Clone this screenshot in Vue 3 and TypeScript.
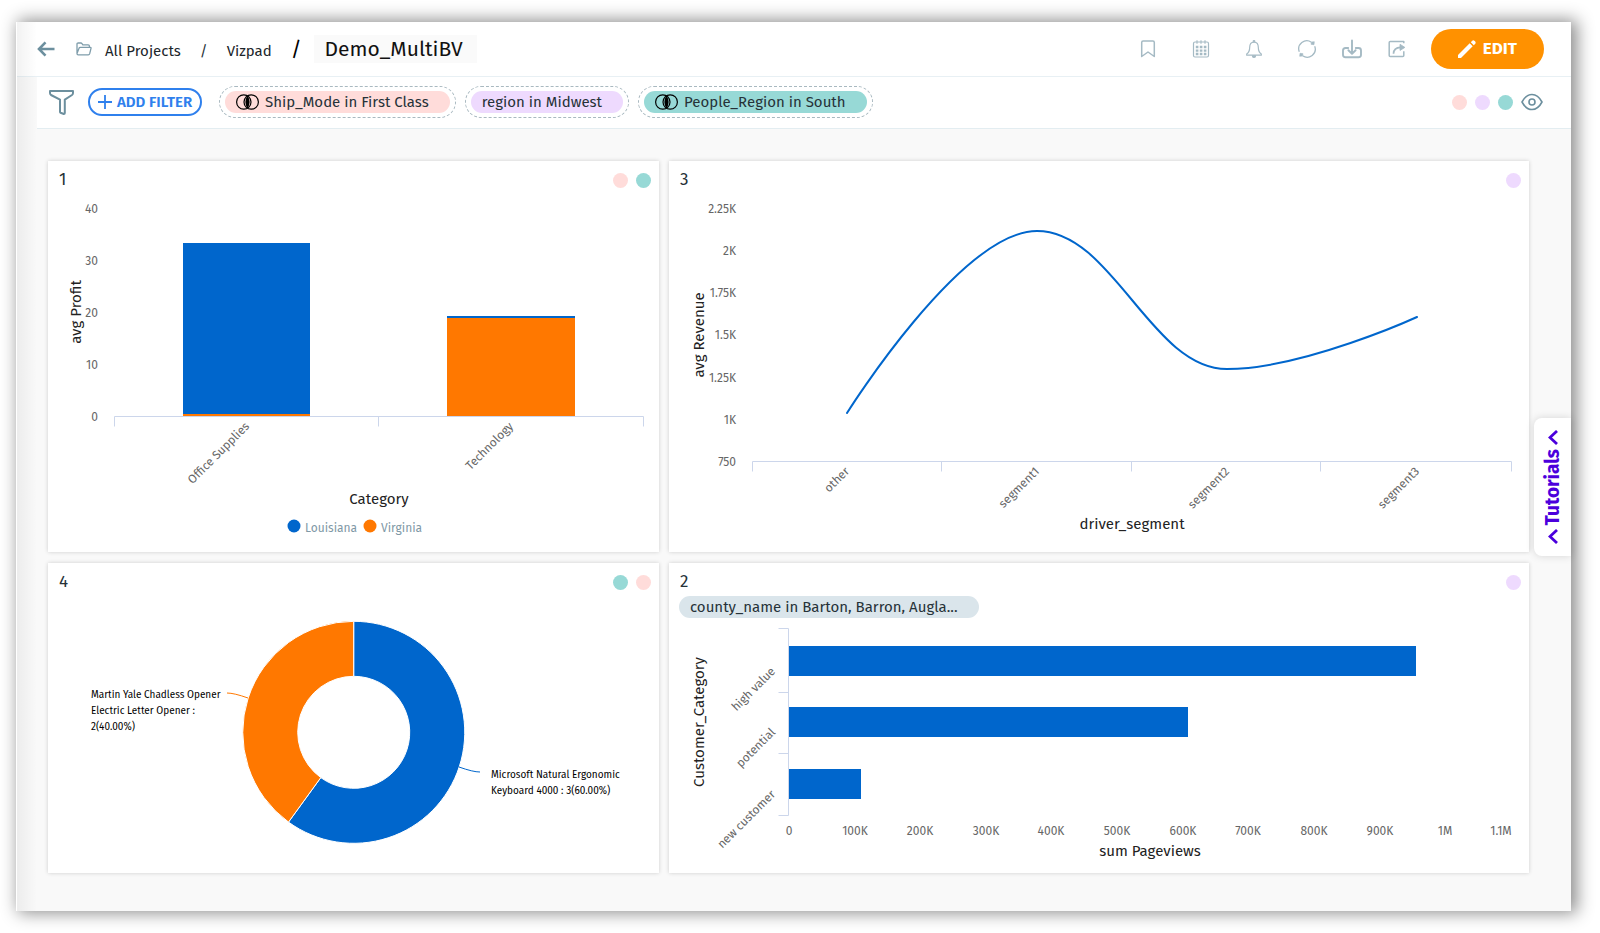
<script setup lang="ts">
type Tone = 'rose' | 'lilac' | 'teal'

interface Filter {
  label: string
  tone: Tone
  blended: boolean
}

interface Tick {
  label: string
  at: number
}

const filters: Filter[] = [
  { label: 'Ship_Mode in First Class', tone: 'rose', blended: true },
  { label: 'region in Midwest', tone: 'lilac', blended: false },
  { label: 'People_Region in South', tone: 'teal', blended: true },
]

const legendTones: Tone[] = ['rose', 'lilac', 'teal']

const profitTicks: Tick[] = [
  { label: '40', at: 18 },
  { label: '30', at: 70 },
  { label: '20', at: 122 },
  { label: '10', at: 174 },
  { label: '0', at: 226 },
]

const revenueTicks: Tick[] = [
  { label: '2.25K', at: 18 },
  { label: '2K', at: 60 },
  { label: '1.75K', at: 102 },
  { label: '1.5K', at: 144 },
  { label: '1.25K', at: 187 },
  { label: '1K', at: 229 },
  { label: '750', at: 271 },
]

const segments: Tick[] = [
  { label: 'other', at: 178 },
  { label: 'segment1', at: 368 },
  { label: 'segment2', at: 558 },
  { label: 'segment3', at: 748 },
]

const categories = [
  { label: 'high value', y: 28, width: 627 },
  { label: 'potential', y: 89, width: 399 },
  { label: 'new customer', y: 151, width: 72 },
]

const pageviewTicks: Tick[] = [
  { label: '0', at: 120 },
  { label: '100K', at: 186 },
  { label: '200K', at: 251 },
  { label: '300K', at: 317 },
  { label: '400K', at: 382 },
  { label: '500K', at: 448 },
  { label: '600K', at: 514 },
  { label: '700K', at: 579 },
  { label: '800K', at: 645 },
  { label: '900K', at: 711 },
  { label: '1M', at: 776 },
  { label: '1.1M', at: 832 },
]
</script>

<template>
  <div class="page">
    <div class="window">
      <header class="topbar">
        <nav class="crumbs" aria-label="Breadcrumb">
          <button class="icon-btn back" type="button" aria-label="Back">
            <svg width="18" height="16" viewBox="0 0 18 16" fill="none" stroke="currentColor" stroke-width="2.6">
              <path d="M17.5 8H2.5M8.5 1.4 2 8l6.500 6.600" />
            </svg>
          </button>
          <svg class="folder" width="16" height="14" viewBox="0 0 16 14" fill="none" stroke="currentColor" stroke-width="1.300" stroke-linejoin="round" aria-hidden="true">
            <path d="M1 11.500V2.200Q1 1 2.200 1h2.600q.8 0 1.200.7l.8 1.100h5.400q1.200 0 1.200 1.200v1.400M1 11.500 3 6.300q.3-.9 1.300-.9h10q1 0 .7 1l-1.300 5.300q-.3 1.100-1.400 1.100H2.200Q1 12.800 1 11.500Z" />
          </svg>
          <div class="trail">
            <a href="#projects">All Projects</a>
            <span>/</span>
            <a href="#vizpad">Vizpad</a>
            <span class="slash">/</span>
            <h1>Demo_MultiBV</h1>
          </div>
        </nav>

        <div class="tools">
          <button class="icon-btn" type="button" aria-label="Bookmark">
            <svg width="20" height="20" viewBox="0 0 20 20" fill="none" stroke="currentColor" stroke-width="1.500" stroke-linejoin="round">
              <path d="M3.700 17.500V3.400q0-1.400 1.400-1.400h9.800q1.400 0 1.400 1.400v14.100L10 13Z" />
            </svg>
          </button>
          <button class="icon-btn" type="button" aria-label="Schedule">
            <svg width="20" height="20" viewBox="0 0 20 20" fill="none" stroke="currentColor">
              <rect x="2.500" y="3" width="15" height="15" rx="1.500" stroke-width="1.200" />
              <path d="M6 1.200v3.600M10 1.200v3.600M14 1.200v3.600" stroke-width="1.100" />
              <path d="M4.800 8h10.600M4.800 11.600h10.600M4.800 15h10.600" stroke-width="2.400" stroke-dasharray="2.600 1.400" />
            </svg>
          </button>
          <button class="icon-btn" type="button" aria-label="Alerts">
            <svg width="20" height="20" viewBox="0 0 20 20" fill="none" stroke="currentColor" stroke-width="1.200" stroke-linejoin="round">
              <path d="M10 3q4.300.3 4.300 5.200 0 4.800 3 6.800v1.200H2.700V15q3-2 3-6.800Q5.700 3.300 10 3Z" />
              <circle cx="10" cy="2.300" r=".8" />
              <path d="M8.400 16.800q0 1.700 1.600 1.700t1.600-1.700Z" fill="currentColor" />
            </svg>
          </button>
          <button class="icon-btn" type="button" aria-label="Refresh">
            <svg width="20" height="20" viewBox="0 0 20 20" fill="none" stroke="currentColor" stroke-width="1.300">
              <path d="M2.300 12.800A8.100 8.100 0 0 1 14.400 3.200M17.700 7.200A8.100 8.100 0 0 1 5.600 16.800" />
              <path d="m14 5.300.6-2.300 2.700-.3-.3 3ZM6 14.700l-.6 2.300-2.700.3.3-3Z" fill="currentColor" stroke-width=".6" />
            </svg>
          </button>
          <button class="icon-btn near" type="button" aria-label="Download">
            <svg width="20" height="20" viewBox="0 0 20 20" fill="none" stroke="currentColor" stroke-width="1.900" stroke-linecap="round" stroke-linejoin="round">
              <path d="M6.200 9H3.500Q1 9 1 11.500v4.200q0 2.500 2.500 2.500h13q2.500 0 2.500-2.500v-4.200Q19 9 16.500 9h-2.700M10 1.500v13M6.400 11.200 10 14.700l3.600-3.500" />
            </svg>
          </button>
          <button class="icon-btn near" type="button" aria-label="Share">
            <svg width="20" height="20" viewBox="0 0 20 20" fill="none" stroke="currentColor" stroke-width="1.500" stroke-linejoin="round">
              <path d="M16.800 4.300V2.500H3.200q-1 0-1 1v13q0 1 1 1h12.600q1 0 1-1v-4.200" />
              <path d="M6.500 14.800q.2-6.200 7-6.400" stroke-width="1.700" />
              <path d="M13 5.300 17.900 8.400 13 11.400Z" fill="currentColor" stroke-width=".8" />
            </svg>
          </button>
          <button class="edit" type="button">
            <svg width="18" height="18" viewBox="0 0 18 18" fill="currentColor" aria-hidden="true">
              <path d="M0 18v-3L11.700 3.300l3 3L3 18ZM12.800 2.200l1.200-1.200q1.200-1.200 2.400-.2l.8.800q1 1.200-.2 2.400l-1.200 1.200Z" />
            </svg>
            EDIT
          </button>
        </div>
      </header>

      <section class="filterbar" aria-label="Filters">
        <svg class="funnel" width="25" height="25" viewBox="0 0 25 25" fill="none" stroke="currentColor" stroke-width="2" stroke-linejoin="round" aria-hidden="true">
          <path d="M1 1h23v2q0 1.300-1 2l-7.200 4.600V23q0 1-1 1l-3.200-1.200q-.6-.3-.6-1V9.600L2 5Q1 4.300 1 3Z" />
        </svg>
        <button class="add" type="button">
          <svg width="14" height="14" viewBox="0 0 14 14" stroke="currentColor" stroke-width="1.800" aria-hidden="true">
            <path d="M7 0v14M0 7h14" />
          </svg>
          ADD FILTER
        </button>
        <ul class="pills">
          <li v-for="f in filters" :key="f.label" class="pill">
            <button type="button" class="pill-body" :class="f.tone">
              <svg v-if="f.blended" width="23" height="16" viewBox="0 0 23 16" fill="none" stroke="#000" stroke-width="1.200" aria-hidden="true">
                <circle cx="7.800" cy="8" r="7.200" />
                <circle cx="15.200" cy="8" r="7.200" />
                <path d="M11.500 3.200q2.600 4.800 0 9.600-2.600-4.800 0-9.600Z" fill="#000" stroke-width="1.600" />
              </svg>
              {{ f.label }}
            </button>
          </li>
        </ul>
        <div class="legend">
          <span v-for="t in legendTones" :key="t" class="dot" :class="t"></span>
          <button class="icon-btn eye" type="button" aria-label="Show filters">
            <svg width="22" height="18" viewBox="0 0 22 18" fill="none" stroke="currentColor" stroke-width="1.600">
              <path d="M1 9q4-7.500 10-7.500T21 9q-4 7.500-10 7.500T1 9Z" stroke-linejoin="round" />
              <circle cx="11" cy="9" r="3" />
            </svg>
          </button>
        </div>
      </section>

      <main class="board">
        <article class="card">
          <header class="card-head">
            <h2>1</h2>
            <span class="dots"><span class="dot rose"></span><span class="dot teal"></span></span>
          </header>
          <div class="plot">
            <svg viewBox="0 0 611 361" role="img" aria-label="Average profit by category">
              <g class="tick end">
                <text v-for="t in profitTicks" :key="t.label" x="50" :y="t.at + 4">{{ t.label }}</text>
              </g>
              <text class="title" transform="translate(33 121) rotate(-90)">avg Profit</text>
              <path class="axis" d="M66.500 235.500v-10h529v10M330.500 225.500v10" />
              <rect class="blue" x="135" y="52" width="127" height="171" />
              <rect class="orange" x="135" y="223" width="127" height="2" />
              <rect class="blue" x="399" y="125" width="128" height="2" />
              <rect class="orange" x="399" y="127" width="128" height="98" />
              <g class="tick end">
                <text transform="translate(202 236) rotate(-45)">Office Supplies</text>
                <text transform="translate(466 236) rotate(-45)">Technology</text>
              </g>
              <text class="title" x="331" y="313">Category</text>
              <circle class="blue" cx="246" cy="335" r="6.500" />
              <circle class="orange" cx="322" cy="335" r="6.500" />
              <g class="tick series">
                <text x="257" y="341">Louisiana</text>
                <text x="333" y="341">Virginia</text>
              </g>
            </svg>
          </div>
        </article>

        <article class="card">
          <header class="card-head">
            <h2>3</h2>
            <span class="dots"><span class="dot lilac"></span></span>
          </header>
          <div class="plot">
            <svg viewBox="0 0 860 361" role="img" aria-label="Average revenue by driver segment">
              <g class="tick end">
                <text v-for="t in revenueTicks" :key="t.label" x="67" :y="t.at + 4">{{ t.label }}</text>
              </g>
              <text class="title" transform="translate(35 144) rotate(-90)">avg Revenue</text>
              <path class="axis" d="M83.500 280.500v-10h759v10M272.500 270.500v10M462.500 270.500v10M651.500 270.500v10" />
              <path class="line" d="M178 222C178 222 292 40 368 40S482 178 558 178 748 126 748 126" />
              <g class="tick end">
                <text v-for="s in segments" :key="s.label" :transform="`translate(${s.at + 3} 281) rotate(-45)`">{{ s.label }}</text>
              </g>
              <text class="title" x="463" y="338">driver_segment</text>
            </svg>
          </div>
        </article>

        <article class="card">
          <header class="card-head">
            <h2>4</h2>
            <span class="dots"><span class="dot teal"></span><span class="dot rose"></span></span>
          </header>
          <div class="plot">
            <svg viewBox="0 0 611 280" role="img" aria-label="Product share">
              <g stroke="#fff">
                <path class="blue" d="M305.700 28.300A111 111 0 1 1 240.500 229.100L272.800 184.600A56 56 0 1 0 305.700 83.300Z" />
                <path class="orange" d="M240.500 229.100A111 111 0 0 1 305.700 28.300V83.300A56 56 0 0 0 272.800 184.600Z" />
              </g>
              <path class="lead warm" d="M179 100q7 0 21 5" />
              <path class="lead" d="M411 174q14 5 21 5" />
              <g class="slice">
                <text x="43" y="105">Martin Yale Chadless Opener</text>
                <text x="43" y="121">Electric Letter Opener :</text>
                <text x="43" y="137">2(40.00%)</text>
                <text x="443" y="185">Microsoft Natural Ergonomic</text>
                <text x="443" y="201">Keyboard 4000 : 3(60.00%)</text>
              </g>
            </svg>
          </div>
        </article>

        <article class="card">
          <header class="card-head">
            <h2>2</h2>
            <span class="dots"><span class="dot lilac"></span></span>
          </header>
          <div class="local-filter">county_name in Barton, Barron, Augla...</div>
          <div class="plot">
            <svg viewBox="0 0 860 255" role="img" aria-label="Pageviews by customer category">
              <text class="title" transform="translate(35 104) rotate(-90)">Customer_Category</text>
              <path class="axis" d="M109.500 10.500h10v187h-10M109.500 74.500h10M109.500 135.500h10" />
              <g v-for="c in categories" :key="c.label">
                <rect class="blue" x="120" :y="c.y" :width="c.width" height="30" />
                <text class="tick end" :transform="`translate(107 ${c.y + 26}) rotate(-45)`">{{ c.label }}</text>
              </g>
              <g class="tick mid">
                <text v-for="t in pageviewTicks" :key="t.label" :x="t.at" y="217">{{ t.label }}</text>
              </g>
              <text class="title" x="481" y="238">sum Pageviews</text>
            </svg>
          </div>
        </article>
      </main>

      <button class="tutorials" type="button">
        <svg width="10" height="15" viewBox="0 0 10 15" fill="none" stroke="currentColor" stroke-width="2.800" aria-hidden="true">
          <path d="M9 1 2 7.500 9 14" />
        </svg>
        <span>Tutorials</span>
        <svg width="10" height="15" viewBox="0 0 10 15" fill="none" stroke="currentColor" stroke-width="2.800" aria-hidden="true">
          <path d="M9 1 2 7.500 9 14" />
        </svg>
      </button>
    </div>
  </div>
</template>

<style>
body {
  margin: 0;
  background: #fff;
}
</style>

<style scoped>
.page {
  box-sizing: border-box;
  min-height: 100vh;
  padding: 22px 29px 22px 16px;
  display: flex;
  font-family: "Fira Sans", "Noto Sans", "Open Sans", sans-serif;
  font-size: 15px;
  line-height: 20px;
  color: #263238;
}

.window {
  position: relative;
  flex: 1;
  min-width: 0;
  display: flex;
  flex-direction: column;
  background: #f9f9f9;
  box-shadow: 4px 0 16px 2px rgba(0, 0, 0, 0.45);
}

.window::after {
  content: "";
  position: absolute;
  inset: 0 auto 0 0;
  width: 20px;
  border-left: 1px solid #fff;
  background: linear-gradient(90deg, rgba(0, 0, 0, 0.05), transparent);
  pointer-events: none;
}

button {
  font: inherit;
  color: inherit;
  border: 0;
  padding: 0;
  background: none;
  cursor: pointer;
}

svg {
  display: block;
}

h1,
h2 {
  margin: 0;
  font-weight: 400;
}

.topbar {
  box-sizing: border-box;
  height: 55px;
  padding: 0 27px 0 21px;
  display: flex;
  align-items: center;
  justify-content: space-between;
  background: #fff;
  border-bottom: 1px solid #e8f0f4;
}

.crumbs {
  display: flex;
  align-items: center;
}

.icon-btn {
  display: flex;
  color: #a5bac4;
}

.back {
  margin-right: 21px;
  color: #6c8f9e;
}

.folder {
  margin-right: 13px;
  color: #7f9dab;
}

.trail {
  display: flex;
  align-items: baseline;
  gap: 19px;
}

.trail a {
  color: #1c262b;
  text-decoration: none;
}

.trail .slash {
  font-size: 21px;
  color: #000;
}

.trail h1 {
  margin-left: -7px;
  padding: 0 14px 0 11px;
  font-size: 21px;
  line-height: 28px;
  color: #111;
  background: #fafafa;
}

.tools {
  display: flex;
  align-items: center;
  gap: 33px;
}

.near {
  margin-left: -8px;
}

.edit {
  margin-left: -9px;
  height: 40px;
  padding: 0 27px;
  display: flex;
  align-items: center;
  gap: 7px;
  border-radius: 20px;
  background: #ff9100;
  color: #fff;
  font-size: 17px;
  font-weight: 700;
}

.filterbar {
  box-sizing: border-box;
  min-height: 52px;
  margin-left: 21px;
  padding: 0 28px 1px 12px;
  display: flex;
  align-items: center;
  background: #fff;
  border-bottom: 1px solid #e3edf1;
}

.funnel {
  margin-right: 14px;
  color: #6c8f9e;
}

.add {
  box-sizing: border-box;
  height: 28px;
  padding: 0 8px;
  display: flex;
  align-items: center;
  gap: 5px;
  border: 2px solid #2f80ed;
  border-radius: 14px;
  color: #2f80ed;
  font-size: 15px;
  font-weight: 600;
}

.pills {
  margin: 0 0 0 17px;
  padding: 0;
  display: flex;
  gap: 9px;
  list-style: none;
}

.pill {
  padding: 4px 5px;
  border: 1px dashed #a9b9c0;
  border-radius: 16px;
}

.pill-body {
  height: 22px;
  padding: 0 21px 0 11px;
  display: flex;
  align-items: center;
  gap: 6px;
  border-radius: 11px;
}

.rose {
  background: #ffdcda;
}

.lilac {
  background: #eedafe;
}

.teal {
  background: #97d9d6;
}

.legend {
  margin-left: auto;
  display: flex;
  align-items: center;
  gap: 8px;
}

.dot {
  width: 15px;
  height: 15px;
  border-radius: 50%;
}

.eye {
  color: #6c8f9e;
}

.board {
  flex: 1;
  padding: 32px 42px 38px 32px;
  display: grid;
  grid-template-columns: minmax(0, 611fr) minmax(0, 860fr);
  grid-template-rows: 391fr 310fr;
  gap: 11px 10px;
}

.card {
  min-width: 0;
  display: flex;
  flex-direction: column;
  background: #fff;
  box-shadow: 0 0 4px rgba(0, 0, 0, 0.18);
}

.card-head {
  padding: 8px 8px 0 11px;
  display: flex;
  align-items: center;
  justify-content: space-between;
}

.card-head h2 {
  font-size: 17px;
  line-height: 22px;
}

.dots {
  display: flex;
  gap: 8px;
}

.local-filter {
  box-sizing: border-box;
  align-self: flex-start;
  min-width: 300px;
  margin: 3px 0 0 10px;
  padding: 0 11px;
  line-height: 22px;
  border-radius: 11px;
  background: #dae5eb;
}

.plot {
  flex: 1;
  min-height: 0;
}

.plot svg {
  width: 100%;
  height: 100%;
}

.tick {
  font-size: 12px;
  fill: #666;
}

.end {
  text-anchor: end;
}

.mid {
  text-anchor: middle;
}

.series {
  fill: #7f99a6;
}

.title {
  font-size: 15px;
  fill: #222;
  text-anchor: middle;
}

.slice {
  font-size: 10px;
  fill: #000;
}

.axis {
  fill: none;
  stroke: #ccd6eb;
}

.line {
  fill: none;
  stroke: #0066cc;
  stroke-width: 2;
  stroke-linecap: round;
}

.lead {
  fill: none;
  stroke: #0066cc;
}

.lead.warm {
  stroke: #ff7800;
}

.blue {
  fill: #0066cc;
}

.orange {
  fill: #ff7800;
}

.tutorials {
  position: absolute;
  right: 0;
  top: 396px;
  width: 37px;
  height: 138px;
  display: flex;
  flex-direction: column;
  align-items: center;
  justify-content: center;
  gap: 4px;
  border-radius: 8px 0 0 8px;
  background: #fff;
  box-shadow: 0 0 8px rgba(0, 0, 0, 0.15);
  color: #4b00dc;
  font-size: 19px;
  font-weight: 700;
}

.tutorials span {
  writing-mode: vertical-rl;
  transform: rotate(180deg);
}
</style>
